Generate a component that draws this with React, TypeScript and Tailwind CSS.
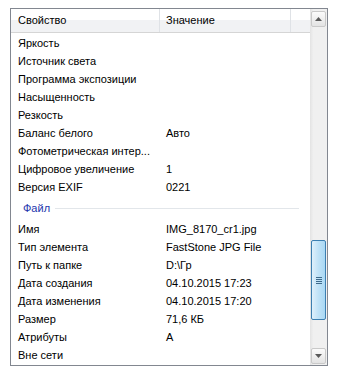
import React from "react";

type Row = { k: string; v?: string };

const exif: Row[] = [
  { k: "Яркость" },
  { k: "Источник света" },
  { k: "Программа экспозиции" },
  { k: "Насыщенность" },
  { k: "Резкость" },
  { k: "Баланс белого", v: "Авто" },
  { k: "Фотометрическая интер..." },
  { k: "Цифровое увеличение", v: "1" },
  { k: "Версия EXIF", v: "0221" },
];

const file: Row[] = [
  { k: "Имя", v: "IMG_8170_cr1.jpg" },
  { k: "Тип элемента", v: "FastStone JPG File" },
  { k: "Путь к папке", v: "D:\\Гр" },
  { k: "Дата создания", v: "04.10.2015 17:23" },
  { k: "Дата изменения", v: "04.10.2015 17:20" },
  { k: "Размер", v: "71,6 КБ" },
  { k: "Атрибуты", v: "A" },
  { k: "Вне сети" },
];

function Line({ r }: { r: Row }) {
  return (
    <div className="flex h-[18px] items-center">
      <div className="w-[149px] shrink-0 whitespace-nowrap pl-[7px]">{r.k}</div>
      <div className="whitespace-nowrap pl-[6px]">{r.v}</div>
    </div>
  );
}

function Arrow({ up }: { up?: boolean }) {
  return (
    <div className="mx-[1px] flex h-[16px] w-[15px] items-center justify-center rounded-[2px] border border-[#c9c9c9] bg-[linear-gradient(#fbfbfb,#e3e3e3)]">
      <svg width="7" height="4" viewBox="0 0 7 4" className={up ? "" : "rotate-180"}>
        <path d="M3.5 0 L7 4 L0 4 Z" fill="#5a5a5a" />
      </svg>
    </div>
  );
}

export default function App() {
  return (
    <div className="h-[377px] w-[346px] bg-white pl-[10px] pt-[8px] text-[11px] text-black [font-family:'Liberation_Sans',Arial,sans-serif]">
      <div className="flex h-[358px] w-[318px] border border-[#828790] bg-white">
        {/* list */}
        <div className="w-[299px] overflow-hidden">
          <div className="flex h-[24px] border-b border-[#d5d5d5] bg-[linear-gradient(#ffffff_0%,#ffffff_50%,#f1f2f4_50%,#f1f2f4_100%)]">
            <div className="flex w-[149px] shrink-0 items-center border-r border-[#dfe2e6] pl-[7px]">Свойство</div>
            <div className="flex w-[131px] shrink-0 items-center border-r border-[#dfe2e6] pl-[6px]">Значение</div>
            <div className="flex-1" />
          </div>
          <div className="pt-[1px]">
            {exif.map((r) => (
              <Line key={r.k} r={r} />
            ))}
            <div className="flex h-[24px] items-center pl-[12px] pr-[11px]">
              <span className="text-[#2336ad]">Файл</span>
              <span className="ml-[5px] h-px flex-1 bg-[#e2e6ea]" />
            </div>
            {file.map((r) => (
              <Line key={r.k} r={r} />
            ))}
          </div>
        </div>

        {/* scrollbar */}
        <div className="flex w-[17px] flex-col bg-[linear-gradient(90deg,#e3e3e3,#f0f0f0_20%,#f0f0f0)] pt-[2px] pb-[1px]">
          <Arrow up />
          <div className="flex-1 pt-[213px]">
            <div className="mx-[1px] flex h-[80px] w-[15px] items-center justify-center rounded-[2px] border border-[#3c7fb1] bg-[linear-gradient(90deg,#dff0fb,#bfe2f7_50%,#a9d8f4)]">
              <div className="flex flex-col gap-[1px]">
                <span className="h-px w-[6px] bg-[#3d6a8c]" />
                <span className="h-px w-[6px] bg-[#3d6a8c]" />
                <span className="h-px w-[6px] bg-[#3d6a8c]" />
                <span className="h-px w-[6px] bg-[#3d6a8c]" />
              </div>
            </div>
          </div>
          <Arrow />
        </div>
      </div>
    </div>
  );
}
